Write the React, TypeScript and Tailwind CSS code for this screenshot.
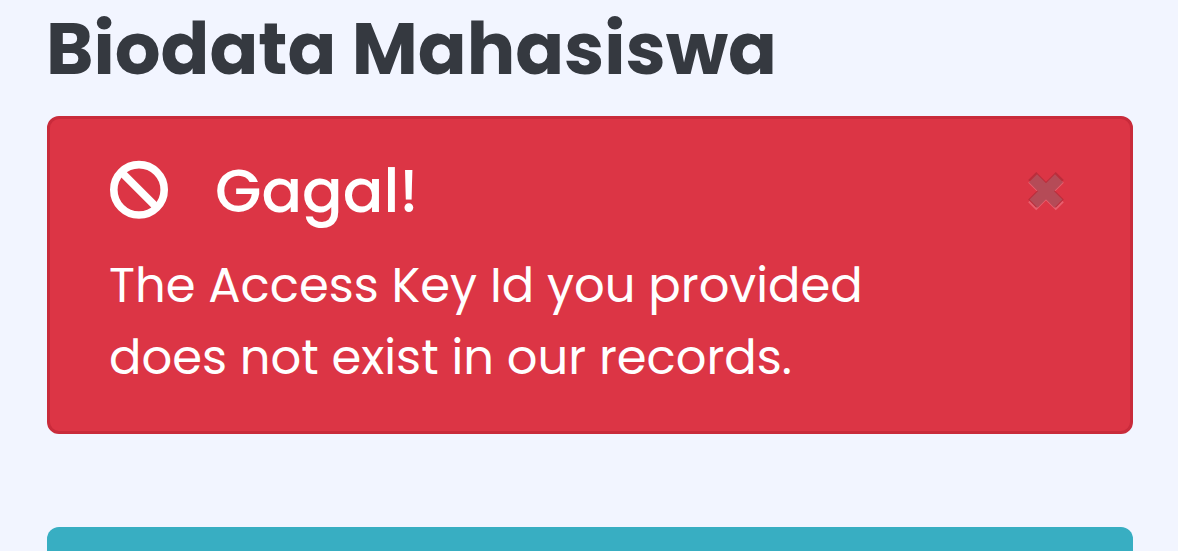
const alert = {
    title: 'Gagal!',
    lines: ['The Access Key Id you provided', 'does not exist in our records.'],
};

const BanIcon = () => (
    <svg className="h-[59px] w-[58px]" viewBox="0 -0.5 58 59" fill="none" stroke="currentColor" strokeWidth="7.6">
        <circle cx="29" cy="29.3" r="25.2" />
        <path d="M11.5 11.8 46.5 46.8" />
    </svg>
);

// Cross with a dark top edge and a light one underneath
const CloseIcon = () => (
    <svg className="h-10 w-9" viewBox="0 0 36 40" fill="none" strokeWidth="11.4">
        <path d="M4.2 7.6 31.8 35.2M31.8 7.6 4.2 35.2" stroke="#e85f6d" />
        <path d="M4.2 5 31.8 32.6M31.8 5 4.2 32.6" stroke="#bb2d3b" />
        <path d="M5 7.2 30.4 32.6M31 7.2 5.6 32.6" stroke="#b54b57" />
    </svg>
);

const App = () => {
    return (
        <div className="bg-[#f2f5ff] pl-[47px] pr-[45px] pt-[6px] font-[Poppins,Inter,sans-serif]">
            <h1 className="-ml-px h-[110px] whitespace-nowrap text-7xl font-bold leading-[86px] text-[#353940]">Biodata Mahasiswa</h1>
            <div className="h-[318px] rounded-xl border-[3px] border-[#c92b3b] bg-[#dc3545] pl-[60px] pr-[66px] pt-[41px] text-white">
                <div className="flex h-[60px] items-start">
                    <BanIcon />
                    <h5 className="ml-[47px] mt-px whitespace-nowrap text-6xl font-medium leading-[60px]">{alert.title}</h5>
                    <button className="ml-auto mt-[11px]" aria-label="Close">
                        <CloseIcon />
                    </button>
                </div>
                <p className="-ml-px mt-[30px] whitespace-nowrap text-5xl leading-[72px]">
                    {alert.lines.map((line) => (
                        <span className="block" key={line}>{line}</span>
                    ))}
                </p>
            </div>
            <div className="mt-[93px] h-6 rounded-t-xl bg-[#38aec2]"></div>
        </div>
    );
};

export default App;
